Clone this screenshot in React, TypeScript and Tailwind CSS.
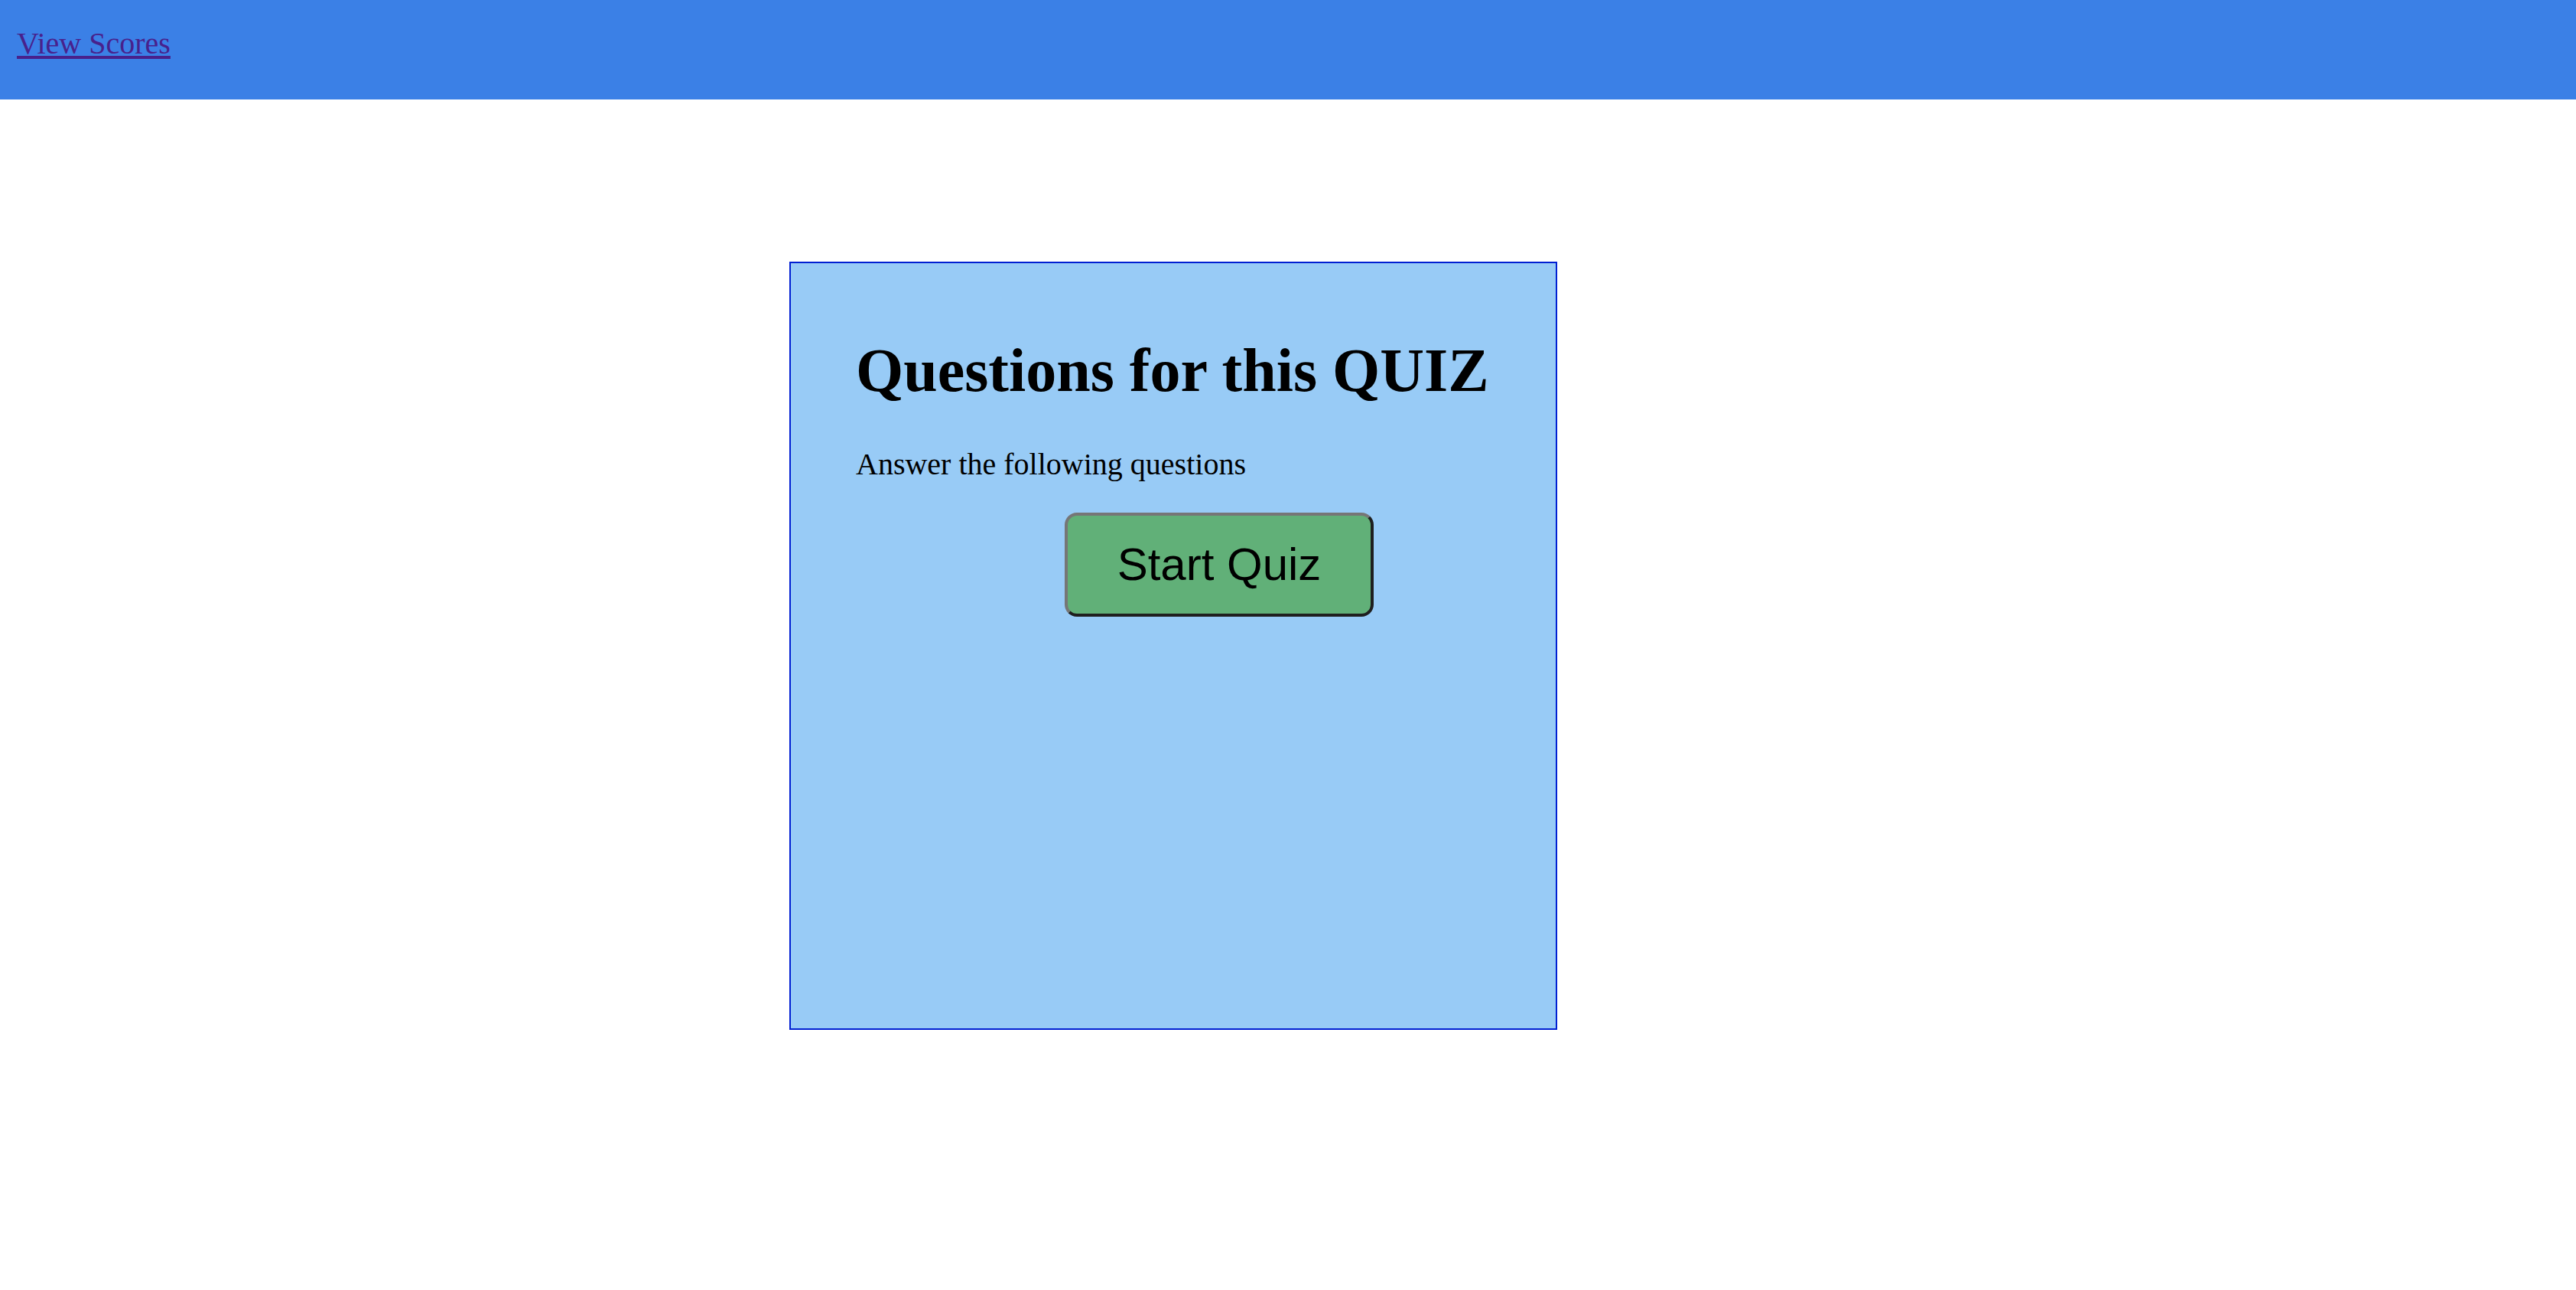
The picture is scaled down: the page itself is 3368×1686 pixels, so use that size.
export default function App() {
  return (
    <div className="min-h-screen bg-white font-['Liberation_Serif',serif] text-[40px] leading-[46px] text-black">
      <nav className="h-[130px] bg-[#3b80e6] px-[22px] pt-[34px]">
        <a href="#scores" className="text-[#48218c] underline decoration-4 underline-offset-[3px]">
          View Scores
        </a>
      </nav>
      <main className="flex justify-center pt-[212px] pr-[300px]">
        <section className="min-h-[1004px] w-[1004px] border-2 border-[#001fd2] bg-[#98cbf6] px-[85px] pt-[94px]">
          <h1 className="text-[80px] leading-[92px] font-bold whitespace-nowrap">Questions for this QUIZ</h1>
          <p className="mt-[54px]">Answer the following questions</p>
          <button
            type="button"
            className="mt-[40px] ml-[273px] block h-[136px] w-[404px] rounded-[16px] border-4 border-t-[#767676] border-r-[#1f1f1f] border-b-[#1f1f1f] border-l-[#767676] bg-[#61b078] font-['Liberation_Sans',sans-serif] text-[60px] leading-[68px]"
          >
            Start Quiz
          </button>
        </section>
      </main>
    </div>
  );
}
